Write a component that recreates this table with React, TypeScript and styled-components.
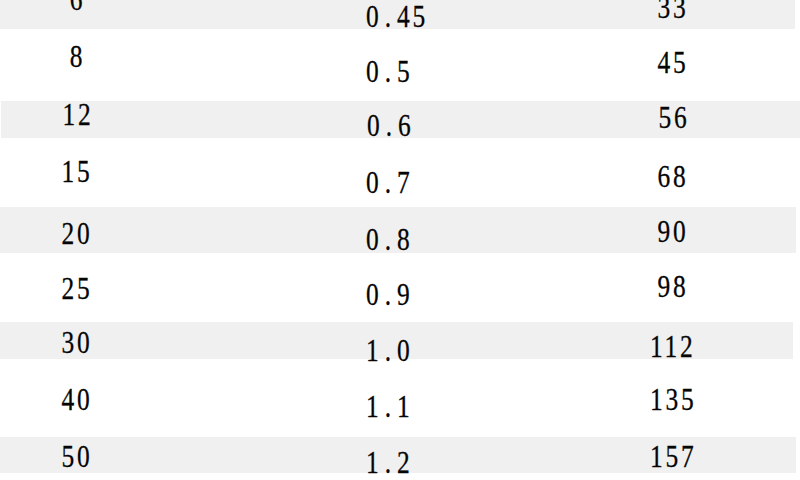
import React from 'react';
import styled, { createGlobalStyle } from 'styled-components';

const GlobalStyle = createGlobalStyle`
  html, body {
    margin: 0;
    padding: 0;
    background: #ffffff;
    overflow: hidden;
  }
`;

const Sheet = styled.div`
  width: 800px;
  height: 480px;
  overflow: hidden;
  background: #ffffff;
  font-family: 'Liberation Serif', 'Times New Roman', serif;
  font-size: 31px;
  line-height: 30px;
  color: #050505;
  -webkit-text-stroke: 0.3px #050505;
`;

const Row = styled.div<{ $h: number; $shaded: boolean; $right: number; $left: number }>`
  display: grid;
  grid-template-columns: 154px 392px 254px;
  align-items: start;
  height: ${({ $h }) => $h}px;
  background: ${({ $shaded }) => ($shaded ? '#f0f0f0' : 'transparent')};
  margin-left: ${({ $left }) => $left}px;
  margin-right: ${({ $right }) => $right}px;
`;

const Cell = styled.div<{ $top: number }>`
  margin-top: ${({ $top }) => $top - 5}px;
  text-align: center;
  white-space: nowrap;
`;

const ValueCell = styled(Cell)`
  text-align: left;
  padding-left: 212px;
`;

/* the scan uses a narrow serif with even, wide character cells */
const Figures = styled.span<{ $origin: 'center' | 'left' }>`
  display: inline-block;
  letter-spacing: 3.4px;
  transform: scaleX(0.82);
  transform-origin: ${({ $origin }) => $origin} top;
`;

const Dot = styled.span`
  padding: 0 3.9px;
`;

type Line = {
  size: string;
  ratio: string;
  weight: string;
  h: number;
  shaded: boolean;
  tops: [number, number, number];
  left?: number;
  right?: number;
};

const lines: Line[] = [
  { size: '6', ratio: '0.45', weight: '33', h: 29, shaded: true, tops: [-10, 7, -2], right: 5 },
  { size: '8', ratio: '0.5', weight: '45', h: 72, shaded: false, tops: [18, 33, 24] },
  { size: '12', ratio: '0.6', weight: '56', h: 37, shaded: true, tops: [4, 15, 7], left: 1 },
  { size: '15', ratio: '0.7', weight: '68', h: 69, shaded: false, tops: [24, 35, 29] },
  { size: '20', ratio: '0.8', weight: '90', h: 46, shaded: true, tops: [17, 23, 15], right: 4 },
  { size: '25', ratio: '0.9', weight: '98', h: 69, shaded: false, tops: [26, 32, 24] },
  { size: '30', ratio: '1.0', weight: '112', h: 37, shaded: true, tops: [11, 19, 15], right: 7 },
  { size: '40', ratio: '1.1', weight: '135', h: 78, shaded: false, tops: [31, 38, 31] },
  { size: '50', ratio: '1.2', weight: '157', h: 36, shaded: true, tops: [10, 16, 10], right: 4 },
];

function Ratio({ value }: { value: string }) {
  const [whole, frac] = value.split('.');
  return (
    <Figures $origin="left">
      {whole}
      <Dot>.</Dot>
      {frac}
    </Figures>
  );
}

export default function App() {
  return (
    <>
      <GlobalStyle />
      <Sheet>
        {lines.map((l) => (
          <Row
            key={l.size}
            $h={l.h}
            $shaded={l.shaded}
            $left={l.left ?? 0}
            $right={l.right ?? 0}
          >
            <Cell $top={l.tops[0]}>
              <Figures $origin="center">{l.size}</Figures>
            </Cell>
            <ValueCell $top={l.tops[1]}>
              <Ratio value={l.ratio} />
            </ValueCell>
            <Cell $top={l.tops[2]}>
              <Figures $origin="center">{l.weight}</Figures>
            </Cell>
          </Row>
        ))}
      </Sheet>
    </>
  );
}
